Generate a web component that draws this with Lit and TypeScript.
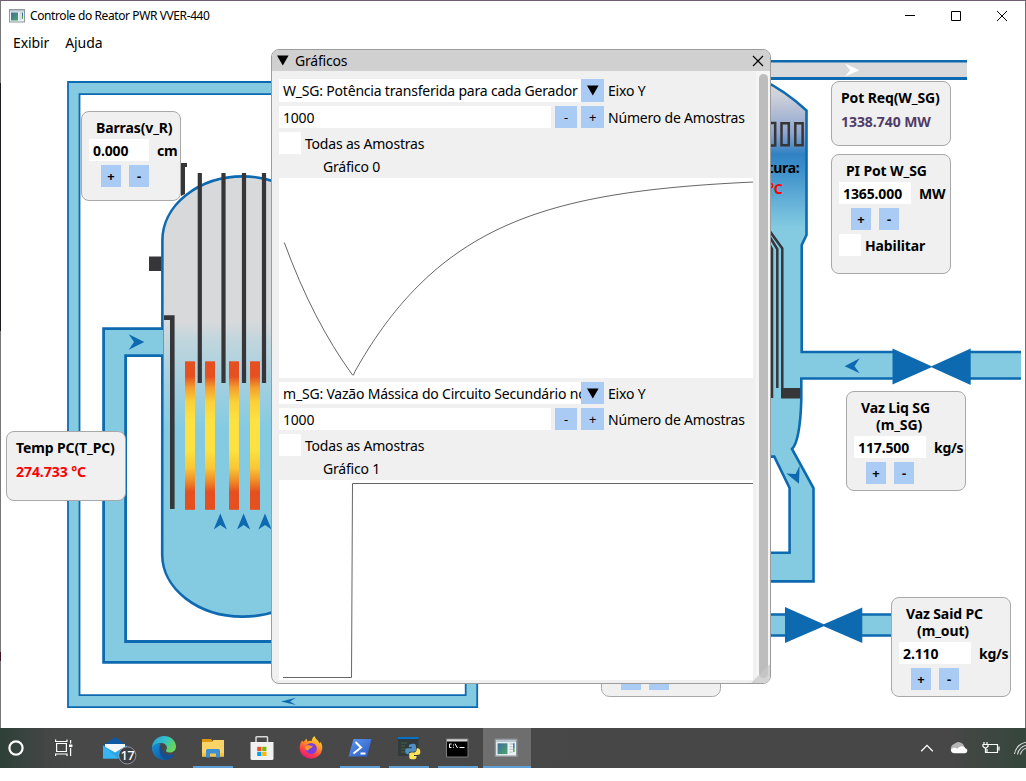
import { LitElement, html, svg, css, nothing } from "lit";
import { customElement, property } from "lit/decorators.js";
import { styleMap } from "lit/directives/style-map.js";

const PIPE = "#84cbe2";
const LINE = "#0e6ab0";
const STEEL = "#363639";

interface Card {
  x: number; y: number; w: number; h: number;
  lines: { text: string; indent: number }[];
  value?: string; tone?: string;
  input?: string; unit?: string; field?: number;
  check?: string;
}

const CARDS: Card[] = [
  { x: 81, y: 111, w: 100, h: 90, lines: [{ text: "Barras(v_R)", indent: 15 }], input: "0.000", unit: "cm", field: 60 },
  { x: 831, y: 81, w: 120, h: 65, lines: [{ text: "Pot Req(W_SG)", indent: 10 }], value: "1338.740 MW", tone: "violet" },
  { x: 831, y: 154, w: 120, h: 120, lines: [{ text: "PI Pot W_SG", indent: 15 }], input: "1365.000", unit: "MW", field: 72, check: "Habilitar" },
  { x: 846, y: 391, w: 120, h: 100, lines: [{ text: "Vaz Liq SG", indent: 15 }, { text: "(m_SG)", indent: 30 }], input: "117.500", unit: "kg/s", field: 72 },
  { x: 891, y: 597, w: 120, h: 100, lines: [{ text: "Vaz Said PC", indent: 15 }, { text: "(m_out)", indent: 26 }], input: "2.110", unit: "kg/s", field: 72 },
  { x: 6, y: 431, w: 120, h: 70, lines: [{ text: "Temp PC(T_PC)", indent: 10 }], value: "274.733 °C", tone: "red" },
];

@customElement("process-card")
class ProcessCard extends LitElement {
  @property({ attribute: false }) card!: Card;

  static styles = css`
    :host { display: block; box-sizing: border-box; border: 1px solid #a8a8a8; border-radius: 8px; background: #f0f0f0; padding-top: 7px;
      font: bold 14px/17px "Noto Sans", sans-serif; color: #000; white-space: nowrap; }
    .line { height: 17px; letter-spacing: var(--bold-track); }
    .value { margin-top: 7px; padding-left: 9px; letter-spacing: -0.05px; }
    .red { color: #f00; }
    .violet { color: #503c69; }
    .row { display: flex; align-items: center; height: 22px; margin: 3px 0 0 7px; letter-spacing: var(--bold-track); }
    .field { box-sizing: border-box; height: 22px; padding-left: 4px; line-height: 23px; background: #fff; }
    .unit { margin-left: 8px; line-height: 23px; letter-spacing: -0.3px; }
    .buttons { display: flex; gap: 8px; margin: 4px 0 0 19px; }
    .btn { width: 20px; height: 22px; background: #aacbf4; text-align: center; line-height: 23px; font-size: 13px; }
    .box { width: 22px; height: 22px; background: #fff; margin-right: 4px; }
    .check { margin-top: 4px; }
  `;

  render() {
    const c = this.card;
    return html`
      ${c.lines.map((l) => html`<div class="line" style=${styleMap({ paddingLeft: `${l.indent - 1}px` })}>${l.text}</div>`)}
      ${c.value ? html`<div class="value ${c.tone}">${c.value}</div>` : nothing}
      ${c.input
        ? html`<div class="row">
              <div class="field" style=${styleMap({ width: `${c.field}px` })}>${c.input}</div>
              <div class="unit">${c.unit}</div>
            </div>
            <div class="buttons"><div class="btn">+</div><div class="btn">-</div></div>`
        : nothing}
      ${c.check ? html`<div class="row check"><div class="box"></div><div>${c.check}</div></div>` : nothing}
    `;
  }
}

@customElement("plant-diagram")
class PlantDiagram extends LitElement {
  static styles = css`
    :host { display: block; width: 1026px; height: 672px; }
    svg { display: block; }
    text { font: bold 14px "Noto Sans", sans-serif; letter-spacing: -0.3px; }
  `;

  render() {
    return html`<svg width="1026" height="672" viewBox="0 56 1026 672">
      <defs>
        <linearGradient id="core" x1="0" x2="0" y1="176" y2="618" gradientUnits="userSpaceOnUse">
          <stop offset=".33" stop-color="#d8d9db" /><stop offset=".37" stop-color="#c1d6dd" />
          <stop offset=".46" stop-color="#a6d0df" /><stop offset=".57" stop-color=${PIPE} />
        </linearGradient>
        <linearGradient id="fuel" x1="0" x2="0" y1="0" y2="1">
          <stop offset=".1" stop-color="#e64f1f" /><stop offset=".18" stop-color="#f4a02d" />
          <stop offset=".27" stop-color="#fad03a" /><stop offset=".4" stop-color="#fbe242" />
          <stop offset=".6" stop-color="#fbe242" /><stop offset=".72" stop-color="#f8c636" />
          <stop offset=".8" stop-color="#f0902a" /><stop offset=".88" stop-color="#e64f1f" />
        </linearGradient>
        <linearGradient id="steam" x1="0" x2="0" y1="80" y2="228" gradientUnits="userSpaceOnUse">
          <stop offset="0" stop-color="#d8d9db" /><stop offset=".1" stop-color="#cfd2da" />
          <stop offset=".36" stop-color="#8ea4d0" /><stop offset=".5" stop-color="#3082c3" />
          <stop offset=".6" stop-color="#3c8fca" /><stop offset="1" stop-color=${PIPE} />
        </linearGradient>
      </defs>

      <path fill=${PIPE} stroke=${LINE} stroke-width="1.8" fill-rule="evenodd" d="M68 82H477.2V707.2H68ZM79.5 94.2H465.7V695.2H79.5Z" />
      <path fill=${LINE} d="M281 701.5L296 697.8L290 701.5L296 705Z" />

      <path fill=${PIPE} d="M163 328.5H103.5V662.5H300V641.7H125.5V355.7H163Z" />
      <path fill="none" stroke=${LINE} stroke-width="2.8" d="M163 328.7H103.6V662.4H300M300 641.5H125.6V355.7H163" />
      <path fill="url(#core)" stroke=${LINE} stroke-width="2.6" d="M162.4 240A80.6 64 0 0 1 243 176.4A80.6 64 0 0 1 323 240V555A80 62 0 0 1 242.4 616.6A80 62 0 0 1 162.2 555Z" />
      <path fill=${PIPE} d="M160 330H163.2V354.3H160Z" />
      <path fill=${LINE} d="M128.7 334.3L144.3 342L128.7 349.7L134 342Z" />

      <g fill=${STEEL}>
        <path d="M181 163H187V167H185V194L181 196Z" />
        <path d="M149 256.5H161.3V271H149Z" />
        <path d="M164 315.3H174.6V509H170V320H164Z" />
        ${[197.7, 221.4, 241.9, 261.9].map((x) => svg`<rect x=${x} y="173" width="4.2" height="210" />`)}
      </g>
      ${[185, 205, 229, 250].map((x) => svg`<rect x=${x} y="361.3" width="10" height="148.5" fill="url(#fuel)" />`)}
      ${[220.3, 243.6, 265].map((x) => svg`<path fill=${LINE} transform="translate(${x} 513.5)" d="M0 0L6.6 16L0 11.6L-6.6 16Z" />`)}

      <path fill="#d8d9db" d="M700 61H967V79H700Z" />
      <path fill=${LINE} d="M700 60H967V62.4H700ZM700 77H967V80H700Z" />
      <path fill="#fff" d="M845 63.5L859.4 70.2L845 76.6L850 70.2Z" />

      <path fill="url(#steam)" d="M700 70Q760 74 779 90Q796 99 807 110.5V235L802 245V352H893V378H801V400Q800 442 792 449L814 489V582H700V552.5H790V489L774 457L700 457Z" />
      <path fill=${PIPE} d="M760 553H814V582H760Z" />
      <path fill="none" stroke=${LINE} stroke-width="2.6" d="M760 79Q783 89 806.5 110.5V235L801.7 245V352H893M893 378.5H801.3V400Q800 441 792 449L813.5 488V581.4H760M760 552.8H789.6V488L774.3 456.6H760" />
      <path fill=${PIPE} d="M970 352H1021V378.5H970ZM760 614H790V636H760ZM860 614H893V636H860Z" />
      <path fill="none" stroke=${LINE} stroke-width="2.6" d="M970 352H1021M970 378.5H1021M760 614.5H790M760 635.5H790M860 614.5H893M860 635.5H893" />
      <g fill=${LINE}>
        <path d="M892.5 348.5L931.5 366.3L970.7 348.5V385L931.5 367.3L892.5 384.5Z" />
        <path d="M785 607L823.7 624.2L862.3 607.6V643L823.7 626.3L785 643Z" />
        <path d="M844.6 366.3L859.7 358.3L854.5 366.3L859.7 373.3Z" />
        <path d="M799 483.8L786.4 473.4L795.6 474L799.6 465.6Z" />
      </g>
      <g fill="none" stroke=${STEEL} stroke-width="2.5">
        <path d="M760 123H775.2V145.5H760ZM781.5 123.2H788.8V145.3H781.5ZM795.3 123.2H802.6V145.3H795.3Z" />
        <path d="M766 226L782.3 248.5V389M766 231L777.3 249V388M766 238L772 249V398" />
      </g>
      <path fill=${STEEL} d="M781 388H800.2V398.5H781Z" />
      <text x="799.5" y="173" text-anchor="end">tura:</text>
      <text x="782.5" y="193.5" text-anchor="end" fill="#f00">°C</text>

      <path fill="#f0f0f0" stroke="#a8a8a8" d="M601.5 660V688.5a8 8 0 0 0 8 8H712.5a8 8 0 0 0 8 -8V660Z" />
      <path fill="#aacbf4" d="M621 668H641V690H621ZM649 668H669V690H649Z" />
    </svg>`;
  }
}

const recovery = () => {
  let d = "M284.3 242.5Q313 321 352.500 375L353.500 375";
  for (let x = 355; x <= 753; x += 2) d += `L${x} ${(177 + 198 * Math.exp(-(x - 353) / 109)).toFixed(2)}`;
  return d;
};

const PLOTS = [
  { series: "W_SG: Potência transferida para cada Gerador", name: "Gráfico 0", top: 178, d: recovery(), tall: true },
  { series: "m_SG: Vazão Mássica do Circuito Secundário no", name: "Gráfico 1", top: 480, d: "M283 677.5H351.5L352.5 483.5H753", tall: false },
];

@customElement("chart-window")
class ChartWindow extends LitElement {
  static styles = css`
    :host { display: flex; flex-direction: column; box-sizing: border-box; width: 500px; height: 635px; border: 1px solid #9c9c9c; border-radius: 8px;
      background: #f0f0f0; overflow: hidden; font: 14px/22px "Noto Sans", sans-serif; color: #000; white-space: nowrap; }
    .title { display: flex; align-items: center; height: 21px; padding: 0 6px 0 5px; background: #d0d0d0; }
    .title span { flex: 1; margin-left: 6px; letter-spacing: var(--track); }
    .content { display: flex; flex: 1; position: relative; }
    .main { width: 474px; margin-left: 7px; padding-top: 8px; }
    .row { display: flex; height: 22px; margin-bottom: 4px; letter-spacing: var(--track); line-height: 23px; }
    .row.tall { height: 23px; line-height: 24px; }
    .combo { width: 298px; padding-left: 4px; overflow: hidden; background: #fff; }
    .arrow { display: flex; align-items: center; justify-content: center; width: 23px; background: #aacbf4; }
    .label { margin-left: 4px; }
    .num { width: 268px; padding-left: 4px; background: #fff; }
    .btn { width: 22px; margin-left: 4px; background: #aacbf4; text-align: center; font-size: 13px; }
    .btn.wide { width: 23px; }
    .box { width: 22px; background: #fff; }
    .name { height: 20px; line-height: 18px; padding-left: 44px; letter-spacing: var(--track); }
    .plot { display: block; background: #fff; margin-bottom: 4px; }
    .track { width: 15px; margin-left: 3px; background: #f5f5f5; }
    .thumb { width: 9px; height: 604px; margin: 3px 0 0 3px; border-radius: 5px; background: #bdbdbd; }
    .grip { position: absolute; right: 0; bottom: 0; }
  `;

  render() {
    return html`
      <div class="title">
        <svg width="12" height="11" viewBox="0 0 12 11"><path d="M0 .5H11.6L5.8 10.5Z" /></svg>
        <span>Gráficos</span>
        <svg width="12" height="12" viewBox="0 0 12 12"><path d="M1 1L11 11M11 1L1 11" stroke="#000" stroke-width="1.2" /></svg>
      </div>
      <div class="content">
        <div class="main">
          ${PLOTS.map((p) => html`
            <div class="row ${p.tall ? "tall" : ""}">
              <div class="combo">${p.series}</div>
              <div class="arrow"><svg width="12" height="11" viewBox="0 0 12 11"><path d="M0 .5H11.6L5.8 10.5Z" /></svg></div>
              <div class="label">Eixo Y</div>
            </div>
            <div class="row">
              <div class="num">1000</div><div class="btn">-</div><div class="btn wide">+</div>
              <div class="label">Número de Amostras</div>
            </div>
            <div class="row"><div class="box"></div><div class="label">Todas as Amostras</div></div>
            <div class="name">${p.name}</div>
            <svg class="plot" width="474" height="200" viewBox="279 ${p.top} 474 200"><path d=${p.d} fill="none" stroke="#666" /></svg>
          `)}
        </div>
        <div class="track"><div class="thumb"></div></div>
        <svg class="grip" width="20" height="20" viewBox="0 0 20 20"><path d="M20 0V20H0Z" fill="#c8c8c8" fill-opacity=".75" /></svg>
      </div>
    `;
  }
}

const APP_ICON = svg`
  <rect x=".5" y=".5" width="15" height="12.5" fill="#eef1f2" stroke="#8f989e" />
  <path d="M1 1H15V2.6H1Z" fill="#b9c6cf" />
  <defs><linearGradient id="app" x2="1" y2="1"><stop stop-color="#3f6f9c" /><stop offset="1" stop-color="#4aa36c" /></linearGradient></defs>
  <path d="M2 3.5H9V11.5H2Z" fill="url(#app)" /><path d="M10.5 4H13M10.5 6H12.5M10.5 8H13M10.5 10H12.5" stroke="#c0c7cb" />
  <path d="M13.5 3.5V7" stroke="#2d6da8" /><path d="M13.5 7V10" stroke="#48a55a" />`;

const TASKS = [
  { kind: "first", icon: svg`<circle cx="12" cy="12" r="6.6" fill="none" stroke="#fff" stroke-width="2.2" />` },
  { kind: "", icon: svg`<g fill="none" stroke="#fff" stroke-width="1.2"><path d="M4.6 7.5H14.4V15.5H4.6ZM3.6 3.5V5.5H15V3.5M3.6 20V18H15V20M18.6 4V7.5M18.6 12V20" /><path d="M17 9.8H20.4" stroke-width="2.6" /></g>` },
  { kind: "after", icon: svg`
      <path d="M0 9.5L12 1L24 9.5V22H0Z" fill="#0c58a4" /><path d="M2 8H22V20H2Z" fill="#f2f5f8" />
      <path d="M0 9.5L12 16.5L24 9.5V22.5H0Z" fill="#2aa5ea" /><path d="M0 9.5L15 22.5H0Z" fill="#35b6f2" />
      <circle cx="24.3" cy="19.4" r="8.6" fill="#3c4044" stroke="#aaa" stroke-width=".8" /><text x="24.2" y="23.9" class="count">17</text>` },
  { kind: "", icon: svg`
      <defs><linearGradient id="e1" x2="1" y2=".4"><stop stop-color="#2a9fdd" /><stop offset=".6" stop-color="#34c3c4" /><stop offset="1" stop-color="#6ad65a" /></linearGradient>
      <linearGradient id="e2" x2="1" y2="1"><stop stop-color="#1690d8" /><stop offset="1" stop-color="#114a8b" /></linearGradient></defs>
      <path d="M0 12C0 5 5.4 0 12 0S24 4.800 24 10.500C24 14.500 21 16.500 17.500 16.500C14.500 16.500 13.600 15.200 14.200 14C16.500 10.500 13 7 9.500 7C5 7 1 9.500 0 12Z" fill="url(#e1)" />
      <path d="M0 12C1 8.500 5 6.800 9 7.200C6 9.500 7.500 19 15.500 19.500C18.500 19.700 21 18.500 22.300 17.700C22 21 16.500 24 12 24C5 24 0 18.500 0 12Z" fill="url(#e2)" />
      <path d="M9 9.500C5.500 14 8 21.500 14 23.500C19 23.500 22.500 19.800 22.300 17.700C17 20.500 9.500 18.500 9 9.500Z" fill="#124f93" />` },
  { kind: "open", icon: svg`
      <path d="M1 3H10L12 5.500V9H1Z" fill="#dd9a0e" /><path d="M1 6H11L12.500 4H23V20.500H1Z" fill="#fbd468" />
      <path d="M1 17H23V20.500H1Z" fill="#f6c548" /><path d="M5 21.500V14.500A1.500 1.500 0 0 1 6.500 13H17.500A1.500 1.500 0 0 1 19 14.500V21.500H15V17.500H9V21.500Z" fill="#3c8fd2" />` },
  { kind: "", icon: svg`
      <path d="M6 7V1.500A1 1 0 0 1 7 .700H16.500A1 1 0 0 1 17.500 1.500V7" fill="none" stroke="#d8d8d8" stroke-width="1.500" />
      <path d="M.500 6H23.500V22.500A1.500 1.500 0 0 1 22 24H2A1.500 1.500 0 0 1 .500 22.500Z" fill="#f1f1f1" />
      <path d="M7.200 10.800H11.400V15H7.200Z" fill="#f04e23" /><path d="M12.200 10.800H16.400V15H12.200Z" fill="#7db700" />
      <path d="M7.200 15.800H11.400V20H7.200Z" fill="#00a1ee" /><path d="M12.200 15.800H16.400V20H12.200Z" fill="#fdb500" />` },
  { kind: "", icon: svg`
      <defs><linearGradient id="f1" x1=".8" y1="0" x2=".3" y2="1"><stop stop-color="#ffe43a" /><stop offset=".4" stop-color="#ff9422" /><stop offset=".75" stop-color="#fb3b4a" /><stop offset="1" stop-color="#e31587" /></linearGradient></defs>
      <path d="M3 4.500L4.500 6L7.500 2.500L8.500 5.500C10.500 4.600 12 4.800 13 5C12.500 3 14 1 15.500 0C16 3 20 4.500 20.500 7.500L21.500 6C23.500 9 23.300 11 23.300 12.500A11.400 11.400 0 0 1 .600 12.500C.600 9 1.500 7 3 4.500Z" fill="url(#f1)" />
      <circle cx="12.200" cy="12.500" r="5.600" fill="#7b3fe0" /><path d="M7 10C9 8 12 11 14 9.500C12.500 13 10 12 9 14.500C6 14 5.500 12 7 10Z" fill="#ff9a28" />` },
  { kind: "open", icon: svg`<defs><linearGradient id="ps" x2="1" y2="1"><stop stop-color="#5d96ee" /><stop offset="1" stop-color="#2a5bc6" /></linearGradient></defs>
      <path d="M5.500 3H23.500L19 20.500H.500Z" fill="url(#ps)" /><path d="M7.500 6L13 11.500L5.500 17.500M12.500 17.500H17.500" fill="none" stroke="#fff" stroke-width="2" />` },
  { kind: "open", icon: svg`
      <path d="M1 1.500H21.500V20H1Z" fill="#333a3c" /><path d="M1 1H21.500V3H1Z" fill="#0a72c4" /><path d="M4 7H10M4 10H8M4 13H9M4 16H8" stroke="#3f6841" stroke-width="1.200" />
      <path d="M15 8C18 7.500 19 8.500 19 10.500V14C19 16 17 15.500 13 15.800C11.800 16 11.800 17.500 11.500 18.500C8.500 18 8 16 8.300 14C8.700 12 10 12.200 15 12.200V11.300H12C11.700 9 12 8.300 15 8Z" fill="#4f8fc4" />
      <path d="M16 23.300C13 23.300 12 22.500 12.200 20.500V18C12.200 16.500 13.500 16.400 17.500 16.400C19.500 16.200 19.700 14 19.700 12.300C22.800 12.300 23.500 14 23.300 16.500C23.100 19 21.500 19 17 19V20H19.500C19.700 22.500 19 23.300 16 23.300Z" fill="#fde05b" />` },
  { kind: "open", icon: svg`
      <path d="M.500 3H22V21H.500Z" fill="#000" stroke="#7d7d7d" /><path d="M1 3.200H21.500V5.500H1Z" fill="#d5d5d5" />
      <path d="M5.500 8H3.500V11.500H5.500M7.500 8.500V9.500M7.500 10.800V11.700M9 7.700L11.500 12M13.500 11.500H18.500" fill="none" stroke="#fff" />` },
  { kind: "open active", icon: svg`<g transform="translate(-.3 2.6) scale(1.42 1.35)">${APP_ICON}</g>` },
];

@customElement("task-bar")
class TaskBar extends LitElement {
  static styles = css`
    :host { display: flex; height: 40px; overflow: hidden;
      background: linear-gradient(90deg, #2e4038 0, #454747 50px, #484848 90px, #474747 950px, #3d4741 990px, #35463c 1026px); }
    .task { display: flex; align-items: center; justify-content: center; box-sizing: border-box; width: 48px; height: 40px; flex: none; margin-right: 1px; }
    .first { width: 40px; margin: 0; padding-right: 8px; }
    .after { margin-left: 2px; }
    .open { background: linear-gradient(#5f9fd6, #5f9fd6) 4px 38px / 40px 2px no-repeat; }
    .active { background: linear-gradient(#5f9fd6, #5f9fd6) 0 38px / 48px 2px no-repeat #6e6e6e; }
    .task svg, .tray svg { overflow: visible; display: block; }
    .count { font: 500 13px "Noto Sans", sans-serif; fill: #fff; text-anchor: middle; letter-spacing: -0.8px; }
    .tray { display: flex; align-items: center; margin-left: auto; gap: 8px; margin-right: -9px; }
  `;

  render() {
    return html`
      ${TASKS.map((t) => html`<div class="task ${t.kind}"><svg width="24" height="24" viewBox="0 0 24 24">${t.icon}</svg></div>`)}
      <div class="tray">
        <svg width="24" height="24"><path d="M6.200 15.200L12 9.400L17.800 15.200" fill="none" stroke="#fff" stroke-width="1.300" /></svg>
        <svg width="24" height="24"><path d="M5 16A5 5 0 0 1 7 8A6 6 0 0 1 17 10L18 14Z" fill="#b5b5b5" /><path d="M4 13.500C6 11 9 11.500 10.500 13C12 10 17 9 18.500 12.500C21.500 13 20.500 17.200 18 17.200H7C4.500 17.200 4 15 4 13.500Z" fill="#fff" /></svg>
        <svg width="24" height="24"><g fill="none" stroke="#fff" stroke-width="1.200"><path d="M9 8.500H18.500V16.500H8V13M20 10.500V14.500" /><path d="M5 6V8.500M8 6V8.500M4 8.500H9V10.500L6.500 12.500L4 10.500ZM6.500 12.500V16.500H8" /></g></svg>
        <svg width="24" height="24"><g fill="none" stroke="#ddd" stroke-width="1.100"><path d="M3.500 18A14 14 0 0 1 17 6" /><path d="M6.500 18.500A11 11 0 0 1 17 9" /><path d="M9.500 18.500A8 8 0 0 1 17 12" /></g></svg>
      </div>
    `;
  }
}

@customElement("app-root")
class AppRoot extends LitElement {
  static styles = css`
    :host { display: flex; flex-direction: column; width: 1026px; height: 781px; overflow: hidden; background: #fff; --track: -0.2px; --bold-track: -0.12px; }
    .desktop { display: flex; flex-direction: column; box-sizing: border-box; height: 728px; border: solid #6f6f6f; border-width: 1px 1px 0 0; border-top-color: #6e5f70;
      background: linear-gradient(#777 0 82px, #1c1c20 82px 330px, #777 330px 651px, #401428 651px 660px, #777 660px) 0 0 / 1px 100% no-repeat; }
    .titlebar { display: flex; align-items: center; height: 29px; padding-left: 9px; font: 12px "Noto Sans", sans-serif; color: #000; }
    .titlebar span { flex: 1; margin-left: 5px; letter-spacing: -0.4px; }
    .ctl { width: 46px; display: flex; justify-content: center; }
    .menu { display: flex; gap: 16px; height: 26px; padding-left: 13px; font: 14px/26px "Noto Sans", sans-serif; letter-spacing: -0.1px; }
    .stage { position: relative; height: 672px; }
    process-card { position: absolute; }
    chart-window { position: absolute; left: 271px; top: -7px; }
  `;

  render() {
    return html`
      <div class="desktop">
        <div class="titlebar">
          <svg width="16" height="14" viewBox="0 0 16 14">${APP_ICON}</svg>
          <span>Controle do Reator PWR VVER-440</span>
          <div class="ctl"><svg width="12" height="12"><path d="M1 5.500H11" stroke="#000" /></svg></div>
          <div class="ctl"><svg width="12" height="12"><path d="M1.500 1.500H10.500V10.500H1.500Z" stroke="#000" fill="none" /></svg></div>
          <div class="ctl"><svg width="12" height="12"><path d="M1 1L11 11M11 1L1 11" stroke="#000" /></svg></div>
        </div>
        <div class="menu"><div>Exibir</div><div>Ajuda</div></div>
        <div class="stage">
          <plant-diagram></plant-diagram>
          ${CARDS.map((c) => html`<process-card .card=${c}
            style=${styleMap({ left: `${c.x}px`, top: `${c.y - 56}px`, width: `${c.w}px`, height: `${c.h}px` })}></process-card>`)}
          <chart-window></chart-window>
        </div>
      </div>
      <task-bar></task-bar>
    `;
  }
}
